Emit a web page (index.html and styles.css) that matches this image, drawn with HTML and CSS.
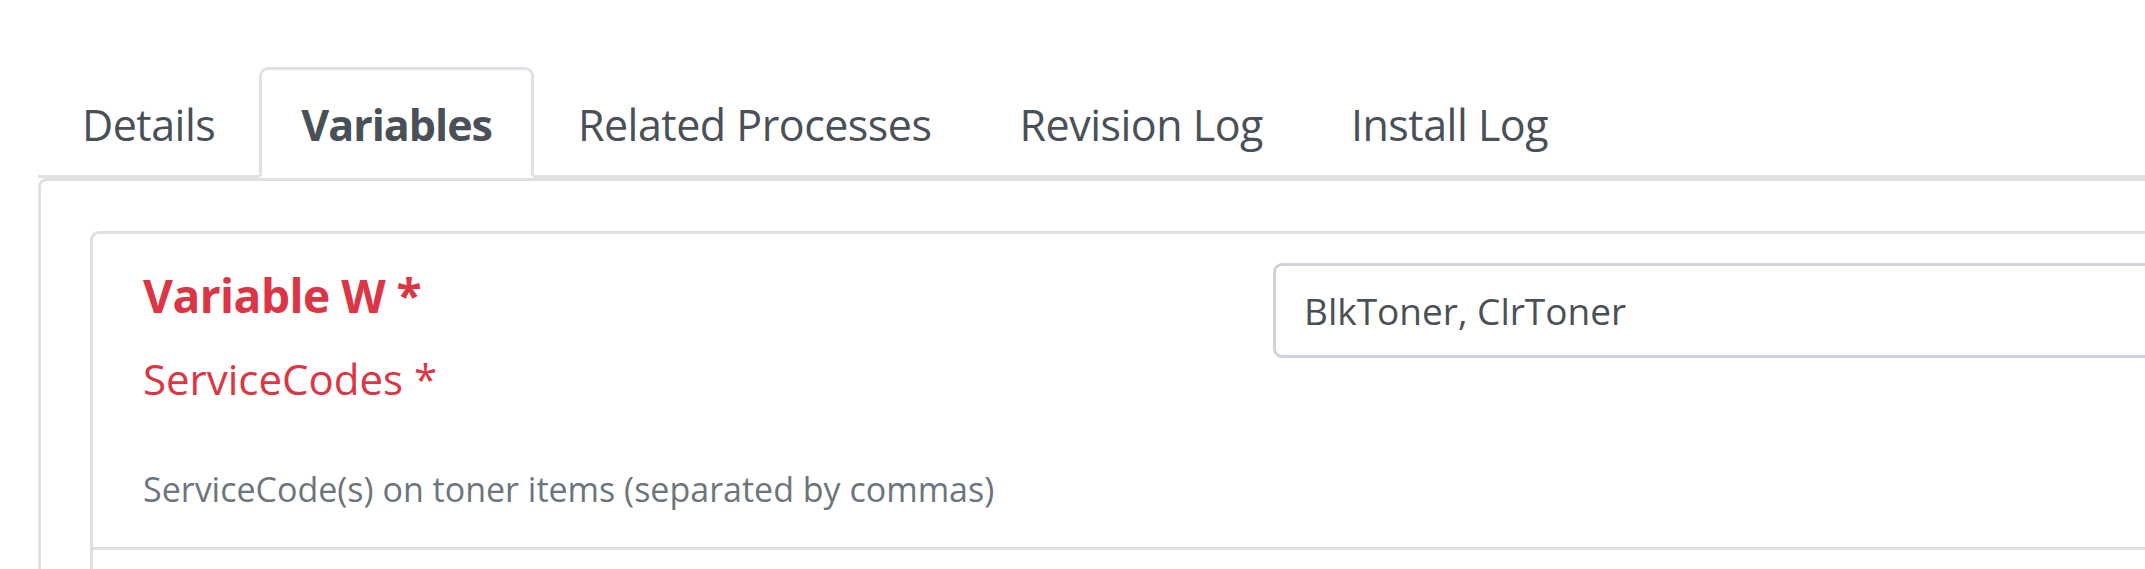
FILE: index.html
```html
<!DOCTYPE html>
<html lang="en">
<head>
<meta charset="utf-8">
<title>Variables</title>
<link rel="stylesheet" href="styles.css">
</head>
<body>
<div class="page">
  <ul class="nav-tabs">
    <li><a class="nav-link">Details</a></li>
    <li><a class="nav-link active">Variables</a></li>
    <li><a class="nav-link">Related Processes</a></li>
    <li><a class="nav-link">Revision Log</a></li>
    <li><a class="nav-link">Install Log</a></li>
  </ul>
  <div class="tab-content">
    <div class="card">
      <div class="var-row">
        <div class="label-col">
          <h5 class="var-title">Variable W *</h5>
          <label class="var-label">ServiceCodes *</label>
          <small class="help">ServiceCode(s) on toner items (separated by commas)</small>
        </div>
        <div class="input-col">
          <input class="form-control" type="text" value="BlkToner, ClrToner">
        </div>
      </div>
      <div class="var-row next"></div>
    </div>
  </div>
</div>
</body>
</html>
```

FILE: styles.css
```css
html, body {
  margin: 0;
  padding: 0;
  background: #fff;
  overflow: hidden;
}
body {
  font-family: "Open Sans", "Noto Sans", sans-serif;
  color: #495057;
}
.page {
  width: 2600px;
  padding: 67px 0 0 38px;
}
.nav-tabs {
  display: flex;
  list-style: none;
  margin: 0;
  padding: 0;
  border-bottom: 3px solid #dee2e6;
}
.nav-link {
  display: block;
  border: 3px solid transparent;
  border-radius: 9px 9px 0 0;
  padding: 22px 41px 17px;
  margin-bottom: -3px;
  font-size: 43px;
  line-height: 66px;
  letter-spacing: -0.5px;
  color: #495057;
}
.nav-link.active {
  border-color: #dee2e6 #dee2e6 #fff;
  background: #fff;
  font-weight: 700;
  letter-spacing: -1px;
  padding-left: 39px;
  padding-right: 39px;
}
.tab-content {
  border: 3px solid #dfdfdf;
  border-radius: 9px 9px 0 0;
  padding: 50px 0 0 49px;
  height: 600px;
}
.card {
  border: 3px solid #dfdfdf;
  border-radius: 9px;
  height: 700px;
}
.var-row {
  display: grid;
  grid-template-columns: 1130px 1fr;
  padding: 29px 50px 30px;
  border-bottom: 3px solid #dfdfdf;
}
.label-col {
  display: flex;
  flex-direction: column;
  align-items: flex-start;
}
.var-title {
  margin: 1px 0 0;
  font-size: 46px;
  line-height: 62px;
  font-weight: 700;
  letter-spacing: -0.5px;
  color: #dc3545;
}
.var-label {
  margin-top: 20px;
  font-size: 42px;
  line-height: 66px;
  color: #dc3545;
}
.help {
  margin-top: 50px;
  font-size: 34px;
  line-height: 55px;
  color: #6c757d;
}
.input-col {
  display: flex;
  align-items: flex-start;
}
.form-control {
  box-sizing: border-box;
  width: 100%;
  height: 95px;
  border: 3px solid #ced4da;
  border-radius: 9px;
  padding: 0 28px;
  font-family: inherit;
  font-size: 37px;
  color: #495057;
  background: #fff;
  outline: none;
}
```
